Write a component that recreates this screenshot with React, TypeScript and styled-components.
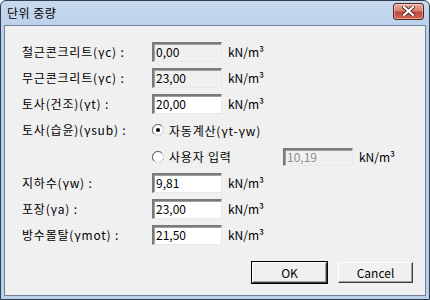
import React from 'react';
import styled, { createGlobalStyle } from 'styled-components';

const GlobalStyle = createGlobalStyle`
  html, body {
    margin: 0;
    padding: 0;
    background: #ffffff;
  }
  body {
    font-family: "Noto Sans CJK KR", "DejaVu Sans", sans-serif;
    font-size: 12px;
    color: #000000;
  }
`;

const Window = styled.div`
  width: 430px;
  height: 300px;
  box-sizing: border-box;
  display: flex;
  flex-direction: column;
  border: 1px solid #2f3d4d;
  border-radius: 6px 6px 0 0;
  background: linear-gradient(#c7d9ee, #b9d0ea 30px, #b9d0ea);
  padding: 0 3px 3px;
  overflow: hidden;
`;

const TitleBar = styled.div`
  height: 24px;
  display: flex;
  align-items: center;
  justify-content: space-between;
  padding: 0 2px 0 3px;
`;

const Title = styled.span`
  font-size: 12px;
  line-height: 14px;
  letter-spacing: 0.5px;
  color: #000000;
`;

const CloseButton = styled.div`
  width: 29px;
  height: 15px;
  margin-top: -4px;
  display: flex;
  align-items: center;
  justify-content: center;
  border: 1px solid #5b2620;
  border-radius: 3px;
  background: linear-gradient(#e8b2a8, #d67f6f 45%, #c4483a 55%, #cf6a58);
  box-shadow: inset 0 0 0 1px rgba(255, 255, 255, 0.35);
`;

const Body = styled.div`
  flex: 1;
  background: #f0f0f0;
  border: 1px solid #6f829a;
  padding: 16px 12px 0 17px;
  display: flex;
  flex-direction: column;
`;

const Form = styled.div`
  display: grid;
  grid-template-columns: 130px 70px 1fr;
  grid-auto-rows: 20px;
  row-gap: 6.15px;
  align-items: center;
`;

const Label = styled.span`
  white-space: nowrap;
  line-height: 20px;
  letter-spacing: 0.8px;
`;

const Field = styled.div<{ $disabled?: boolean; $readOnly?: boolean }>`
  box-sizing: border-box;
  height: ${(p) => (p.$disabled ? '18px' : '20px')};
  width: 70px;
  border-style: solid;
  border-width: 2px 1px 1px 2px;
  border-color: #7a7a7a #e8e8e8 #e8e8e8 #7a7a7a;
  box-shadow: inset 1px 1px 0 #a0a0a0;
  background: ${(p) => (p.$readOnly || p.$disabled ? '#f0f0f0' : '#ffffff')};
  color: ${(p) => (p.$disabled ? '#8d8d8d' : '#000000')};
  padding-left: 2px;
  line-height: ${(p) => (p.$disabled ? '14px' : '16px')};
  font-size: 12px;
  white-space: nowrap;
`;

const Unit = styled.span`
  padding-left: 6px;
  line-height: 20px;
  white-space: nowrap;
`;

const Radios = styled.div`
  grid-column: 2 / 4;
  display: flex;
  align-items: center;
`;

const RadioLabel = styled.span<{ $width?: number }>`
  display: inline-flex;
  align-items: center;
  gap: 5px;
  white-space: nowrap;
  letter-spacing: 0.8px;
  width: ${(p) => (p.$width ? `${p.$width}px` : 'auto')};
`;

const Buttons = styled.div`
  display: flex;
  justify-content: flex-end;
  gap: 11px;
  margin-top: auto;
  margin-bottom: 12px;
`;

const Button = styled.div<{ $default?: boolean }>`
  box-sizing: border-box;
  width: 75px;
  height: 21px;
  display: flex;
  align-items: center;
  justify-content: center;
  background: #f0f0f0;
  border: 1px solid;
  border-color: #ffffff #404040 #404040 #ffffff;
  box-shadow: ${(p) =>
    p.$default
      ? '0 0 0 1px #000000, inset -1px -1px 0 #a0a0a0'
      : 'inset -1px -1px 0 #a0a0a0'};
  font-size: 12px;
`;

const Radio = ({ checked }: { checked?: boolean }) => (
  <svg width="12" height="12" viewBox="0 0 12 12">
    <circle cx="6" cy="6" r="5.5" fill="#ffffff" stroke="#a0a0a0" />
    <path d="M2 10 A5 5 0 0 1 10 2" fill="none" stroke="#6d6d6d" strokeWidth="1" />
    <path d="M10 2 A5 5 0 0 1 2 10" fill="none" stroke="#e6e6e6" strokeWidth="1" />
    {checked && <circle cx="6" cy="6" r="2" fill="#000000" />}
  </svg>
);

const CloseIcon = () => (
  <svg width="13" height="10" viewBox="0 0 13 10">
    <path d="M2 1 L11 9 M11 1 L2 9" stroke="#5a2b25" strokeWidth="4" strokeLinecap="square" />
    <path d="M2 1 L11 9 M11 1 L2 9" stroke="#ffffff" strokeWidth="2.2" strokeLinecap="square" />
  </svg>
);

const rows = [
  { label: '철근콘크리트(γc) :', value: '0,00', readOnly: true },
  { label: '무근콘크리트(γc) :', value: '23,00', readOnly: true },
  { label: '토사(건조)(γt) :', value: '20,00' },
];

const lowerRows = [
  { label: '지하수(γw) :', value: '9,81' },
  { label: '포장(γa) :', value: '23,00' },
  { label: '방수몰탈(γmot) :', value: '21,50' },
];

const UNIT = 'kN/m³';

export default function App() {
  return (
    <>
      <GlobalStyle />
      <Window>
        <TitleBar>
          <Title>단위 중량</Title>
          <CloseButton>
            <CloseIcon />
          </CloseButton>
        </TitleBar>
        <Body>
          <Form>
            {rows.map((r) => (
              <React.Fragment key={r.label}>
                <Label>{r.label}</Label>
                <Field $readOnly={r.readOnly}>{r.value}</Field>
                <Unit>{UNIT}</Unit>
              </React.Fragment>
            ))}
            <Label>토사(습윤)(γsub) :</Label>
            <Radios>
              <RadioLabel>
                <Radio checked />
                자동계산(γt-γw)
              </RadioLabel>
            </Radios>
            <Label />
            <Radios>
              <RadioLabel $width={131}>
                <Radio />
                사용자 입력
              </RadioLabel>
              <Field $disabled>10,19</Field>
              <Unit>{UNIT}</Unit>
            </Radios>
            {lowerRows.map((r) => (
              <React.Fragment key={r.label}>
                <Label>{r.label}</Label>
                <Field>{r.value}</Field>
                <Unit>{UNIT}</Unit>
              </React.Fragment>
            ))}
          </Form>
          <Buttons>
            <Button $default>OK</Button>
            <Button>Cancel</Button>
          </Buttons>
        </Body>
      </Window>
    </>
  );
}
